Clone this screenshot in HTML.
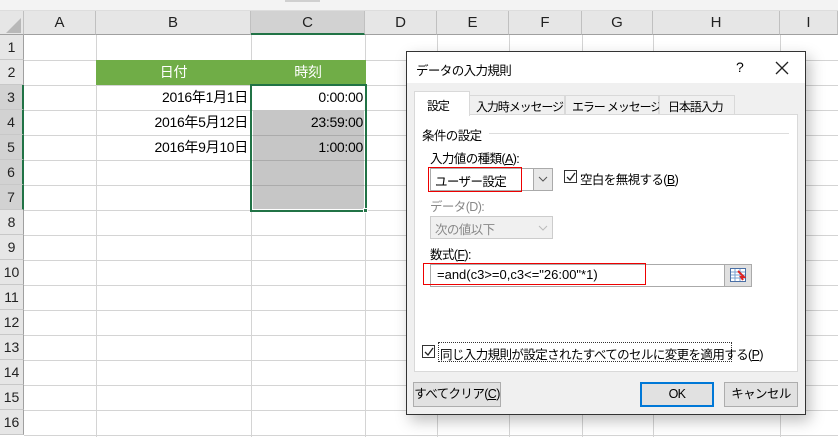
<!DOCTYPE html>
<html><head><meta charset="utf-8"><style>
*{margin:0;padding:0;box-sizing:border-box}
body{width:838px;height:437px;overflow:hidden;background:#fff;position:relative;font-family:"Liberation Sans","Noto Sans CJK JP",sans-serif;font-size:14px;color:#000}
.a{position:absolute}
.vl{position:absolute;top:35px;height:402px;width:1px;background:#d4d4d4}
.hl{position:absolute;left:24px;width:814px;height:1px;background:#d4d4d4}
.ch{position:absolute;top:11px;height:24px;background:#e6e6e6;border-right:1px solid #c0c0c0;border-bottom:1px solid #a0a0a0;text-align:center;line-height:24px;font-size:15px;color:#222}
.rh{position:absolute;left:0;width:24px;height:25px;background:#e6e6e6;border-bottom:1px solid #c8c8c8;border-right:1px solid #a0a0a0;text-align:center;line-height:25px;font-size:14px;color:#222}
.cell{position:absolute;height:25px;line-height:25px;font-size:14px;letter-spacing:-0.3px}
.dlg{position:absolute;left:406px;top:51px;width:400px;height:364px;background:#f0f0f0;border:1px solid #333;box-shadow:4px 6px 14px rgba(0,0,0,.25)}
.t{position:absolute;font-size:12.5px;white-space:nowrap;letter-spacing:-0.6px}
.tab{position:absolute;font-size:12px;white-space:nowrap;letter-spacing:-1.1px}
.btn{position:absolute;height:25px;background:#e1e1e1;border:1px solid #adadad;text-align:center;line-height:23px;font-size:12.5px;white-space:nowrap;letter-spacing:-0.6px}
</style></head><body>
<div class="a" style="left:0;top:0;width:838px;height:11px;background:#f3f3f3;border-bottom:1px solid #ddd"></div>
<div class="a" style="left:285px;top:0;width:35px;height:2px;background:#d0d0d0"></div>
<div class="vl" style="left:96px"></div><div class="vl" style="left:251px"></div><div class="vl" style="left:365px"></div><div class="vl" style="left:437px"></div><div class="vl" style="left:509px"></div><div class="vl" style="left:582px"></div><div class="vl" style="left:653px"></div><div class="vl" style="left:780px"></div>
<div class="hl" style="top:60px"></div><div class="hl" style="top:85px"></div><div class="hl" style="top:110px"></div><div class="hl" style="top:135px"></div><div class="hl" style="top:160px"></div><div class="hl" style="top:185px"></div><div class="hl" style="top:210px"></div><div class="hl" style="top:235px"></div><div class="hl" style="top:260px"></div><div class="hl" style="top:285px"></div><div class="hl" style="top:310px"></div><div class="hl" style="top:335px"></div><div class="hl" style="top:360px"></div><div class="hl" style="top:385px"></div><div class="hl" style="top:410px"></div><div class="hl" style="top:435px"></div>
<div class="ch" style="left:0;width:24px"><svg width="20" height="20" style="position:absolute;left:3px;top:3px"><polygon points="18,4 18,19 3,19" fill="#b8b8b8"/></svg></div>
<div class="ch" style="left:24px;width:72px">A</div>
<div class="ch" style="left:96px;width:155px">B</div>
<div class="ch" style="left:251px;width:114px;background:#d2d2d2;border-bottom:2px solid #217346">C</div>
<div class="ch" style="left:365px;width:72px">D</div>
<div class="ch" style="left:437px;width:72px">E</div>
<div class="ch" style="left:509px;width:73px">F</div>
<div class="ch" style="left:582px;width:71px">G</div>
<div class="ch" style="left:653px;width:127px">H</div>
<div class="ch" style="left:780px;width:58px">I</div>
<div class="rh" style="top:35px">1</div><div class="rh" style="top:60px">2</div>
<div class="rh" style="top:85px;background:#d2d2d2;border-right:2px solid #217346">3</div>
<div class="rh" style="top:110px;background:#d2d2d2;border-right:2px solid #217346">4</div>
<div class="rh" style="top:135px;background:#d2d2d2;border-right:2px solid #217346">5</div>
<div class="rh" style="top:160px;background:#d2d2d2;border-right:2px solid #217346">6</div>
<div class="rh" style="top:185px;background:#d2d2d2;border-right:2px solid #217346">7</div>
<div class="rh" style="top:210px">8</div><div class="rh" style="top:235px">9</div><div class="rh" style="top:260px">10</div><div class="rh" style="top:285px">11</div><div class="rh" style="top:310px">12</div><div class="rh" style="top:335px">13</div><div class="rh" style="top:360px">14</div><div class="rh" style="top:385px">15</div><div class="rh" style="top:410px">16</div>
<div class="a" style="left:96px;top:60px;width:270px;height:25px;background:#70ad47"></div>
<div class="cell" style="left:96px;top:60px;width:155px;text-align:center;color:#fff">日付</div>
<div class="cell" style="left:251px;top:60px;width:114px;text-align:center;color:#fff">時刻</div>
<div class="a" style="left:253px;top:110px;width:111px;height:99px;background:#c6c6c6"></div>
<div class="hl" style="left:253px;width:111px;top:135px;background:#ababab"></div>
<div class="hl" style="left:253px;width:111px;top:160px;background:#ababab"></div>
<div class="hl" style="left:253px;width:111px;top:185px;background:#ababab"></div>
<div class="cell" style="left:96px;top:85px;width:152px;text-align:right">2016年1月1日</div>
<div class="cell" style="left:96px;top:110px;width:152px;text-align:right">2016年5月12日</div>
<div class="cell" style="left:96px;top:135px;width:152px;text-align:right">2016年9月10日</div>
<div class="cell" style="left:251px;top:85px;width:112px;text-align:right">0:00:00</div>
<div class="cell" style="left:251px;top:110px;width:112px;text-align:right">23:59:00</div>
<div class="cell" style="left:251px;top:135px;width:112px;text-align:right">1:00:00</div>
<div class="a" style="left:250px;top:84px;width:117px;height:128px;border:2px solid #217346"></div>
<div class="a" style="left:363px;top:208px;width:5px;height:5px;background:#217346;border:1px solid #fff"></div>
<div class="dlg">
<div class="a" style="left:0;top:0;width:398px;height:31px;background:#fff"></div>
<div class="t" style="left:9px;top:8px">データの入力規則</div>
<div class="t" style="left:329px;top:7px;font-size:14px">?</div>
<svg class="a" style="left:368px;top:9px" width="14" height="14"><path d="M1 1L13 13M13 1L1 13" stroke="#222" stroke-width="1.3"/></svg>
<div class="a" style="left:7px;top:62px;width:384px;height:258px;background:#fff;border:1px solid #d9d9d9"></div>
<div class="a" style="left:7px;top:39px;width:56px;height:25px;background:#fff;border:1px solid #d9d9d9;border-bottom:none"></div>
<div class="tab" style="left:20px;top:45px">設定</div>
<div class="a" style="left:62px;top:43px;width:96px;height:20px;background:#f0f0f0;border:1px solid #d9d9d9"></div>
<div class="tab" style="left:69px;top:46px">入力時メッセージ</div>
<div class="a" style="left:158px;top:43px;width:94px;height:20px;background:#f0f0f0;border:1px solid #d9d9d9"></div>
<div class="tab" style="left:165px;top:46px">エラー メッセージ</div>
<div class="a" style="left:252px;top:43px;width:76px;height:20px;background:#f0f0f0;border:1px solid #d9d9d9"></div>
<div class="tab" style="left:261px;top:46px">日本語入力</div>
<div class="t" style="left:15px;top:73px">条件の設定</div>
<div class="a" style="left:82px;top:81px;width:300px;height:1px;background:#ddd"></div>
<div class="t" style="left:23px;top:96px">入力値の種類(<u>A</u>):</div>
<div class="a" style="left:23px;top:116px;width:123px;height:23px;background:#fff;border:1px solid #aaa"></div>
<div class="a" style="left:126px;top:116px;width:20px;height:23px;background:#e8e8e8;border:1px solid #aaa"></div>
<svg class="a" style="left:131px;top:124px" width="10" height="6"><path d="M1 1L5 5L9 1" stroke="#555" fill="none"/></svg>
<div class="a" style="left:21px;top:115px;width:94px;height:25px;border:1px solid #e00"></div>
<div class="t" style="left:28px;top:119px">ユーザー設定</div>
<div class="a" style="left:157px;top:118px;width:13px;height:13px;border:1px solid #333;background:#fff"></div>
<svg class="a" style="left:159px;top:120px" width="10" height="10"><path d="M1 5L4 8L9 1" stroke="#222" fill="none" stroke-width="1.3"/></svg>
<div class="t" style="left:173px;top:117px">空白を無視する(<u>B</u>)</div>
<div class="t" style="left:23px;top:144px;color:#888">データ(D):</div>
<div class="a" style="left:23px;top:164px;width:123px;height:23px;background:#f0f0f0;border:1px solid #ccc"></div>
<div class="t" style="left:28px;top:167px;color:#888">次の値以下</div>
<svg class="a" style="left:131px;top:173px" width="10" height="6"><path d="M1 1L5 5L9 1" stroke="#bbb" fill="none"/></svg>
<div class="t" style="left:23px;top:192px">数式(<u>F</u>):</div>
<div class="a" style="left:23px;top:212px;width:322px;height:23px;background:#fff;border:1px solid #aaa"></div>
<div class="a" style="left:317px;top:212px;width:28px;height:23px;background:#e0e0e0;border:1px solid #aaa"></div>
<svg class="a" style="left:323px;top:216px" width="16" height="14"><rect x="0.5" y="0.5" width="15" height="13" fill="#fff" stroke="#4a6fa5"/><path d="M1 4H15M1 7H15M1 10H15M5 1V13M10 1V13" stroke="#7aa0d0"/><path d="M8 3L14 9L11 9L13 12" stroke="#d22" stroke-width="2" fill="none"/></svg>
<div class="a" style="left:16px;top:211px;width:223px;height:22px;border:1px solid #e00"></div>
<div class="t" style="left:30px;top:215px;font-size:13px;letter-spacing:0">=and(c3&gt;=0,c3&lt;="26:00"*1)</div>
<div class="a" style="left:15px;top:293px;width:13px;height:13px;border:1px solid #333;background:#fff"></div>
<svg class="a" style="left:17px;top:295px" width="10" height="10"><path d="M1 5L4 8L9 1" stroke="#222" fill="none" stroke-width="1.3"/></svg>
<div class="a" style="left:31px;top:290px;width:294px;height:20px;border:1px dotted #333"></div>
<div class="t" style="left:33px;top:292px">同じ入力規則が設定されたすべてのセルに変更を適用する(<u>P</u>)</div>
<div class="btn" style="left:6px;top:330px;width:88px">すべてクリア(<u>C</u>)</div>
<div class="btn" style="left:233px;top:330px;width:74px;border:2px solid #0078d7;line-height:21px">OK</div>
<div class="btn" style="left:317px;top:330px;width:74px">キャンセル</div>
</div>
</body></html>
